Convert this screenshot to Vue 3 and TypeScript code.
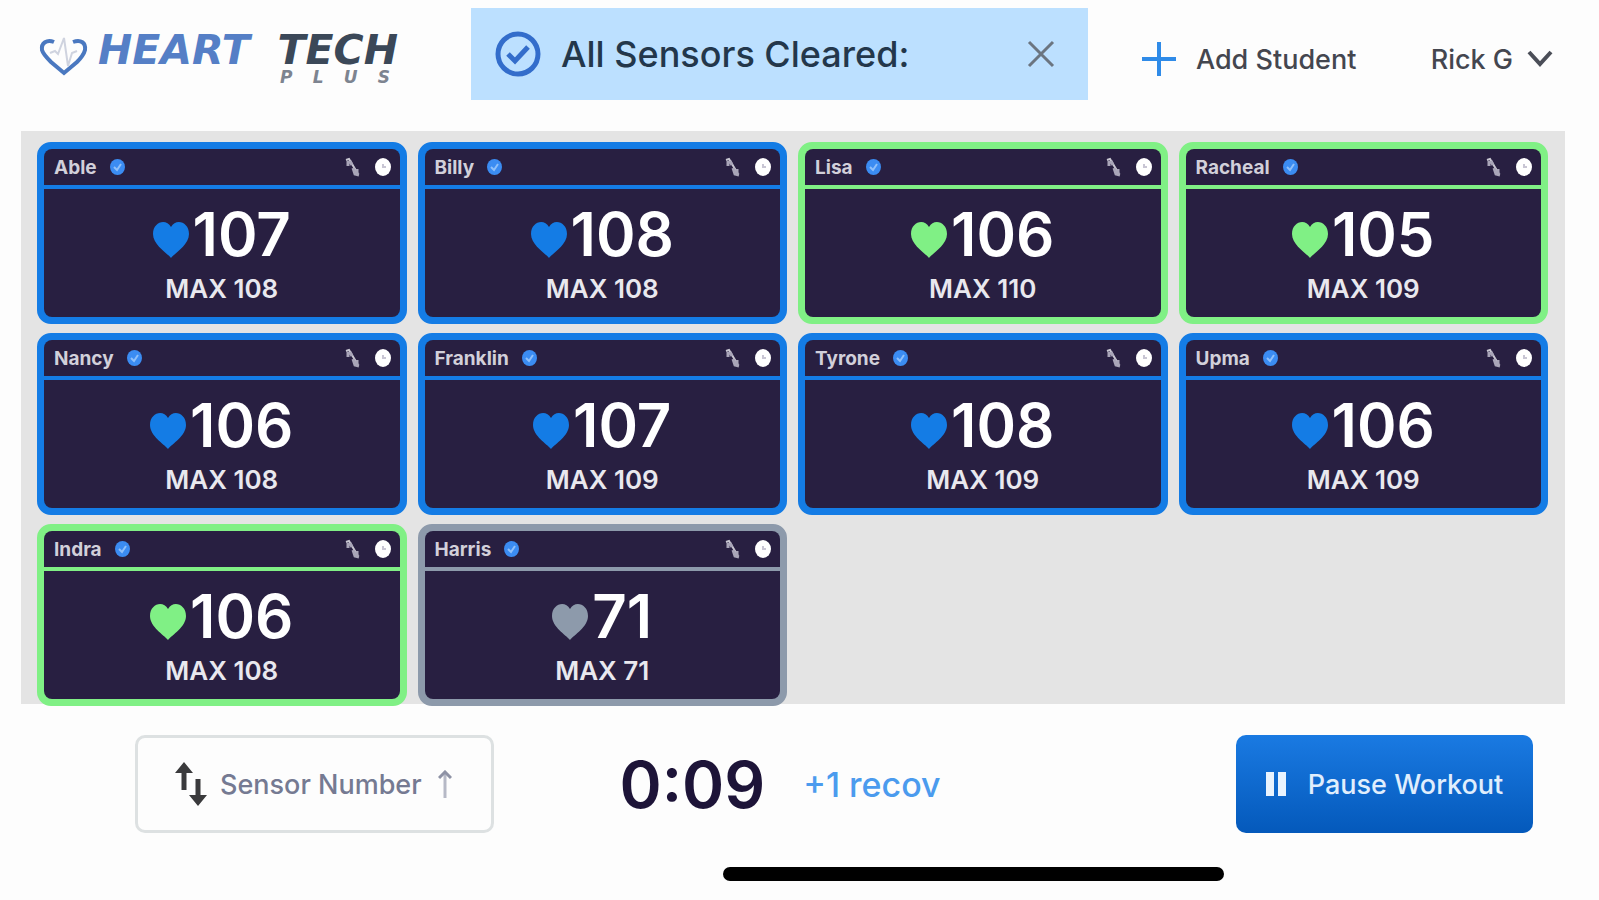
<script setup lang="ts">
type Zone = 'blue' | 'green' | 'gray'
interface Student {
  name: string
  rate: number
  max: number
  zone: Zone
}

const students: Student[] = [
  { name: 'Able', rate: 107, max: 108, zone: 'blue' },
  { name: 'Billy', rate: 108, max: 108, zone: 'blue' },
  { name: 'Lisa', rate: 106, max: 110, zone: 'green' },
  { name: 'Racheal', rate: 105, max: 109, zone: 'green' },
  { name: 'Nancy', rate: 106, max: 108, zone: 'blue' },
  { name: 'Franklin', rate: 107, max: 109, zone: 'blue' },
  { name: 'Tyrone', rate: 108, max: 109, zone: 'blue' },
  { name: 'Upma', rate: 106, max: 109, zone: 'blue' },
  { name: 'Indra', rate: 106, max: 108, zone: 'green' },
  { name: 'Harris', rate: 71, max: 71, zone: 'gray' },
]
</script>

<template>
  <div class="app">
    <header class="topbar">
      <div class="logo">
        <svg width="50" height="44" viewBox="0 0 50 44" fill="none">
          <path d="M16 8C9 5 3 9 4 16C5 20 9 24 13 28L26 39L39 28C43 24 46 20 47 16C48 9 43 5 35 8" stroke="#4a78c0" stroke-width="4" />
          <path d="M12 19L17 17L20 20L26 4L30 32L34 19L39 17" stroke="#cfd3df" stroke-width="2" />
        </svg>
        <div class="logo-text">
          <div class="logo-main"><span class="logo-a">HEART</span><span class="logo-b">TECH</span></div>
          <div class="logo-plus"><span>P</span><span>L</span><span>U</span><span>S</span></div>
        </div>
      </div>
      <div class="toast" role="status">
        <svg width="48" height="48" viewBox="0 0 48 48" fill="none">
          <circle cx="24" cy="24" r="20" stroke="#336dcb" stroke-width="5" />
          <path d="M14 24L21 31L34 17" stroke="#336dcb" stroke-width="5" />
        </svg>
        <span class="toast-text">All Sensors Cleared:</span>
        <button class="close" type="button" aria-label="Dismiss">
          <svg width="28" height="28" viewBox="0 0 28 28" fill="none">
            <path d="M2 2L26 26M26 2L2 26" stroke="#6b7580" stroke-width="3" />
          </svg>
        </button>
      </div>
      <nav class="actions">
        <button class="action" type="button">
          <svg width="34" height="34" viewBox="0 0 34 34" fill="none">
            <path d="M17 0V34M0 17H34" stroke="#2f8be8" stroke-width="4" />
          </svg>
          <span>Add Student</span>
        </button>
        <button class="action user" type="button">
          <span>Rick G</span>
          <svg width="26" height="18" viewBox="0 0 26 18" fill="none">
            <path d="M2 2L13 14L24 2" stroke="#4b4e58" stroke-width="4" />
          </svg>
        </button>
      </nav>
    </header>

    <main class="board">
      <article v-for="s in students" :key="s.name" class="card" :class="s.zone">
        <div class="card-head">
          <span class="name">{{ s.name }}</span>
          <svg class="badge" width="15" height="16" viewBox="0 0 15 16" fill="none">
            <ellipse cx="7.5" cy="8" rx="7.5" ry="8" fill="#3b8cf2" />
            <path d="M4 8L7 11L11 5" stroke="#8fc0fa" stroke-width="2" />
          </svg>
          <svg class="percent" width="16" height="20" viewBox="0 0 16 20" fill="none">
            <path d="M2 3L5 2L14 17" stroke="#c9c7d2" stroke-width="2" />
            <path d="M4 4V9M6 4L8 8M9 11L11 17L15 18M13 12V17" stroke="#a9a5b8" stroke-width="3" />
          </svg>
          <svg width="18" height="20" viewBox="0 0 18 20" fill="none">
            <ellipse cx="9" cy="10" rx="8" ry="9" fill="#ffffff" />
            <path d="M9 7V10H12" stroke="#c9c6d4" stroke-width="2" />
          </svg>
        </div>
        <div class="card-body">
          <div class="rate">
            <svg class="heart" width="36" height="36" viewBox="0 0 36 36">
              <path d="M18 36C14 31 0 23 0 12C0 0 13 -4 18 5C23 -4 36 0 36 12C36 23 22 31 18 36Z" fill="currentColor" />
            </svg>
            <span>{{ s.rate }}</span>
          </div>
          <div class="max">MAX {{ s.max }}</div>
        </div>
      </article>
    </main>

    <footer class="controls">
      <button class="sort" type="button">
        <svg width="34" height="46" viewBox="0 0 34 46" fill="none">
          <path d="M10 6V29M24 18V40" stroke="#3a3a3c" stroke-width="5" />
          <path d="M1 12L10 1L19 12ZM15 34L24 45L33 34Z" fill="#3a3a3c" />
        </svg>
        <span>Sensor Number</span>
        <svg class="up" width="14" height="28" viewBox="0 0 14 28" fill="none">
          <path d="M7 4V28" stroke="#b6b9c6" stroke-width="3" />
          <path d="M1 8L7 2L13 8" stroke="#8e92a5" stroke-width="3" />
        </svg>
      </button>
      <div class="clock">
        <span class="time">0:09</span>
        <span class="recov">+1 recov</span>
      </div>
      <button class="pause" type="button">
        <svg width="20" height="24" viewBox="0 0 20 24">
          <path d="M0 0H8V24H0ZM12 0H20V24H12Z" fill="#e9f3fe" />
        </svg>
        <span>Pause Workout</span>
      </button>
    </footer>
    <div class="home"><div class="home-bar"></div></div>
  </div>
</template>

<style>
body {
  margin: 0;
  background: #fdfdfd;
}
</style>

<style scoped>
.app {
  min-height: 100vh;
  overflow: hidden;
  font-family: Inter, "Liberation Sans", sans-serif;
  color: #44464f;
}
button {
  font-family: inherit;
  border: 0;
  padding: 0;
  background: none;
  color: inherit;
  cursor: pointer;
}
svg {
  display: block;
  flex: none;
}
.topbar {
  display: grid;
  grid-template-columns: 433fr 617fr 511fr;
  padding: 8px 0 21px 38px;
}
.logo {
  display: flex;
  gap: 10px;
  padding-top: 26px;
}
.logo-text {
  width: 300px;
}
.logo-main {
  display: flex;
  justify-content: space-between;
  font: italic bold 41px/32px "DejaVu Sans", sans-serif;
}
.logo-a {
  color: #557fc6;
}
.logo-b {
  color: #3b4858;
}
.logo-plus {
  display: flex;
  justify-content: space-between;
  width: 110px;
  margin: 2px 0 0 auto;
  padding-right: 8px;
  font: italic bold 17px/18px "DejaVu Sans", sans-serif;
  color: #7d8490;
}
.toast {
  display: flex;
  align-items: center;
  height: 92px;
  padding: 0 33px 0 23px;
  box-sizing: border-box;
  background: #bce0ff;
}
.toast-text {
  flex: 1;
  margin-left: 19px;
  font-size: 36px;
  font-weight: 500;
  color: #23374b;
  white-space: nowrap;
}
.actions {
  display: flex;
  justify-content: space-between;
  align-items: center;
  height: 102px;
  padding: 0 46px 0 54px;
}
.action {
  display: flex;
  align-items: center;
  gap: 20px;
  font-size: 27px;
  font-weight: 500;
}
.user {
  gap: 14px;
}
.board {
  display: grid;
  grid-template-columns: repeat(4, 1fr);
  grid-auto-rows: 182px;
  gap: 9px 11px;
  height: 562px;
  margin: 0 34px 0 21px;
  padding: 11px 17px 0 16px;
  background: #e4e4e4;
}
.card {
  box-sizing: border-box;
  border: 7px solid currentColor;
  border-radius: 14px;
  background: currentColor;
}
.blue {
  color: #147ce5;
}
.green {
  color: #80f085;
}
.gray {
  color: #8d9aab;
}
.card-head {
  display: flex;
  align-items: center;
  height: 36px;
  padding: 0 8px 0 10px;
  margin-bottom: 4px;
  border-radius: 8px 8px 0 0;
  background: #281f41;
}
.name {
  font-size: 19px;
  font-weight: 700;
  color: #d2d0da;
}
.badge {
  margin-left: 13px;
}
.percent {
  margin: 0 14px 0 auto;
}
.card-body {
  height: 128px;
  box-sizing: border-box;
  padding-top: 12px;
  border-radius: 0 0 8px 8px;
  background: #281f41;
}
.rate {
  display: flex;
  justify-content: center;
  align-items: center;
  gap: 4px;
  height: 66px;
  font-size: 60px;
  font-weight: 600;
}
.rate span {
  color: #ffffff;
}
.heart {
  margin-top: 12px;
}
.max {
  margin-top: 2px;
  font-size: 26px;
  line-height: 40px;
  font-weight: 600;
  text-align: center;
  color: #e9e8ee;
}
.controls {
  display: flex;
  align-items: center;
  justify-content: space-between;
  padding: 31px 66px 0 135px;
}
.sort {
  display: flex;
  align-items: center;
  gap: 12px;
  width: 359px;
  height: 98px;
  box-sizing: border-box;
  padding: 0 36px;
  border: 3px solid #dde1e2;
  border-radius: 10px;
  font-size: 27px;
  font-weight: 500;
  color: #757a92;
  white-space: nowrap;
}
.up {
  margin-left: 4px;
}
.clock {
  display: flex;
  align-items: center;
  gap: 38px;
  margin-right: 170px;
}
.time {
  font-size: 64px;
  font-weight: 600;
  color: #1d1438;
}
.recov {
  font-size: 34px;
  font-weight: 500;
  color: #4b9bee;
}
.pause {
  display: flex;
  align-items: center;
  justify-content: center;
  gap: 22px;
  width: 297px;
  height: 98px;
  border-radius: 10px;
  background: linear-gradient(#1a7ae2, #0459bb);
  font-size: 27px;
  font-weight: 500;
  color: #e0eefd;
  white-space: nowrap;
}
.home {
  display: grid;
  grid-template-columns: 723fr 501fr 375fr;
  padding: 34px 0 19px;
}
.home-bar {
  grid-column: 2;
  height: 14px;
  border-radius: 7px;
  background: #000000;
}
</style>
